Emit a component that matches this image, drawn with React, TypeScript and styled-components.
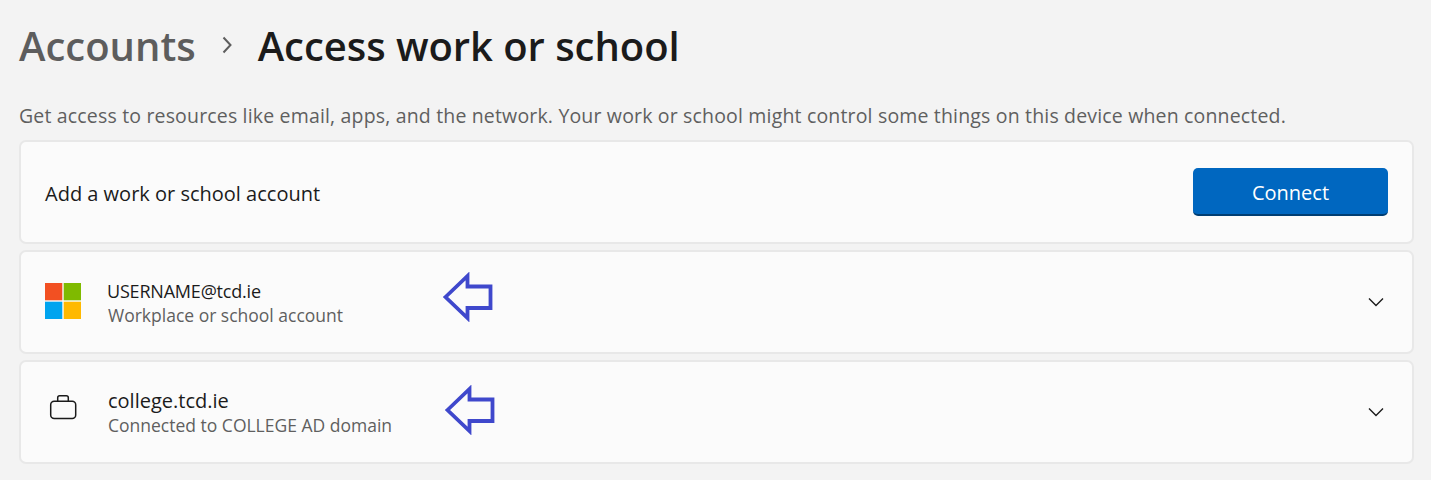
import React from "react"
import styled, { createGlobalStyle } from "styled-components"

const Global = createGlobalStyle`
  html, body { margin: 0; padding: 0; background: #f3f3f3; }
  body { font-family: "Open Sans", "Noto Sans", sans-serif; overflow: hidden; }
`

const Page = styled.div`
  width: 1431px;
  height: 480px;
  box-sizing: border-box;
  padding: 0 17px 0 19px;
`

const Breadcrumb = styled.div`
  display: flex;
  align-items: center;
  height: 90px;
  margin-bottom: 2px;
  font-size: 40px;
  font-weight: 600;
`

const Parent = styled.span`
  color: #5d5d5d;
`

const Current = styled.span`
  color: #1b1b1b;
  letter-spacing: -0.05px;
`

const Separator = styled.svg`
  width: 12px;
  height: 18px;
  margin: 0 25px 0 25px;
  fill: none;
  stroke: #5d5d5d;
  stroke-width: 2;
`

const Intro = styled.p`
  margin: 0;
  height: 48px;
  padding-top: 11px;
  box-sizing: border-box;
  font-size: 19.5px;
  line-height: 26px;
  color: #5f5f5f;
  letter-spacing: 0.17px;
  white-space: nowrap;
`

const Stack = styled.div`
  display: flex;
  flex-direction: column;
  gap: 6px;
`

const Card = styled.div`
  position: relative;
  display: flex;
  align-items: center;
  height: 104px;
  box-sizing: border-box;
  padding: 0 24px;
  background: #fbfbfb;
  border: 2px solid #e8e8e8;
  border-radius: 7px;
`

const Title = styled.div`
  flex: 1;
  padding-top: 2px;
  font-size: 20px;
  color: #1b1b1b;
`

const ConnectButton = styled.button`
  width: 195px;
  height: 48px;
  padding: 3px 0 0;
  border: 0;
  border-bottom: 2px solid #003e73;
  border-radius: 5px;
  background: #0067c0;
  color: #ffffff;
  font-family: inherit;
  font-size: 20px;
`

const IconSlot = styled.div`
  width: 63px;
  display: flex;
  align-items: center;
  padding-bottom: 2px;
`

const Texts = styled.div`
  flex: 1;
  display: flex;
  flex-direction: column;
  padding-top: 2px;
`

const Name = styled.div<{ $size: number; $spacing?: number; $indent?: number }>`
  margin-left: ${(p) => p.$indent ?? 0}px;
  font-size: ${(p) => p.$size}px;
  line-height: 24px;
  color: #1b1b1b;
  letter-spacing: ${(p) => p.$spacing ?? 0}px;
`

const Detail = styled.div`
  font-size: 17.5px;
  line-height: 24px;
  color: #5f5f5f;
`

const Chevron = styled.svg`
  width: 18px;
  height: 10px;
  margin-right: 3px;
  fill: none;
  stroke: #1b1b1b;
  stroke-width: 1.4;
`

const Callout = styled.svg<{ $left: number; $top: number }>`
  position: absolute;
  left: ${(p) => p.$left}px;
  top: ${(p) => p.$top}px;
  width: 50px;
  height: 50px;
  fill: none;
  stroke: #3f48cc;
  stroke-width: 3.8;
`

const Arrow = ({ left, top }: { left: number; top: number }) => (
  <Callout $left={left} $top={top} viewBox="0 0 50 50">
    <path d="M2.5 25 L24.5 4 V14.5 H47.5 V36 H24.5 V46 Z" />
  </Callout>
)

const Windows = () => (
  <svg width="36" height="36" viewBox="0 0 36 36">
    <rect width="17.3" height="17.3" fill="#f25022" />
    <rect x="18.7" width="17.3" height="17.3" fill="#7fba00" />
    <rect y="18.7" width="17.3" height="17.3" fill="#00a4ef" />
    <rect x="18.7" y="18.7" width="17.3" height="17.3" fill="#ffb900" />
  </svg>
)

const Briefcase = () => (
  <svg width="36" height="36" viewBox="0 0 36 36" fill="none" stroke="#1b1b1b" strokeWidth="1.5">
    <rect x="5.7" y="8.3" width="25" height="17.3" rx="3.5" />
    <path d="M12.7 8.3 V4.8 a2 2 0 0 1 2 -2 h6.6 a2 2 0 0 1 2 2 V8.3" />
  </svg>
)

const Down = () => (
  <Chevron viewBox="0 0 18 10">
    <path d="M2 1.5 L9 8.5 L16 1.5" />
  </Chevron>
)

export default function App() {
  return (
    <Page>
      <Global />
      <Breadcrumb>
        <Parent>Accounts</Parent>
        <Separator viewBox="0 0 12 18">
          <path d="M2.5 1.5 L9.5 9 L2.5 16.5" />
        </Separator>
        <Current>Access work or school</Current>
      </Breadcrumb>
      <Intro>
        Get access to resources like email, apps, and the network. Your work or school might control some things on this device when connected.
      </Intro>
      <Stack>
        <Card>
          <Title>Add a work or school account</Title>
          <ConnectButton>Connect</ConnectButton>
        </Card>
        <Card>
          <IconSlot>
            <Windows />
          </IconSlot>
          <Texts>
            <Name $size={18} $spacing={-0.2} $indent={-1}>USERNAME@tcd.ie</Name>
            <Detail>Workplace or school account</Detail>
          </Texts>
          <Down />
          <Arrow left={422} top={20} />
        </Card>
        <Card>
          <IconSlot>
            <Briefcase />
          </IconSlot>
          <Texts>
            <Name $size={20}>college.tcd.ie</Name>
            <Detail>Connected to COLLEGE AD domain</Detail>
          </Texts>
          <Down />
          <Arrow left={424} top={23} />
        </Card>
      </Stack>
    </Page>
  )
}
